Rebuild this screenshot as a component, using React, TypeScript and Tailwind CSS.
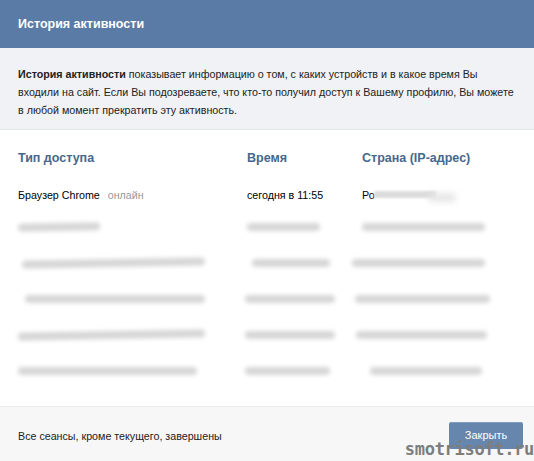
import React from 'react';

type Bar = { left: number; width: number; tilt?: boolean };

const rows: Bar[][] = [
  [{ left: 18, width: 82, tilt: true }, { left: 247, width: 73 }, { left: 362, width: 123 }],
  [{ left: 22, width: 183, tilt: true }, { left: 252, width: 78 }, { left: 352, width: 133 }],
  [{ left: 25, width: 180 }, { left: 245, width: 90 }, { left: 355, width: 135 }],
  [{ left: 18, width: 187, tilt: true }, { left: 245, width: 90 }, { left: 356, width: 131 }],
  [{ left: 18, width: 179 }, { left: 245, width: 85 }, { left: 370, width: 112 }],
];

const BlurRow: React.FC<{ bars: Bar[] }> = ({ bars }) => (
  <div className="relative h-[36px]">
    {bars.map((b, i) => (
      <div
        key={i}
        className={`absolute top-[11px] h-[8px] rounded-full bg-[#d6d6d6] blur-[2px] ${b.tilt ? '-rotate-[1deg]' : ''}`}
        style={{ left: b.left, width: b.width }}
      />
    ))}
  </div>
);

const App: React.FC = () => {
  return (
    <div className="w-[534px] h-[461px] bg-white flex flex-col relative overflow-hidden text-[10.7px] text-black" style={{ fontFamily: '"Liberation Sans", Arial, sans-serif' }}>
      <div className="h-[48px] bg-[#5a7ba6] flex items-center px-[18px]">
        <span className="text-white font-bold text-[12.5px]">История активности</span>
      </div>

      <div className="h-[82px] bg-[#f0f2f5] border-b border-[#e3e7ec] px-[18px] pt-[17px] leading-[18px] text-[#222] whitespace-nowrap">
        <b>История активности</b> показывает информацию о том, с каких устройств и в какое время Вы
        <br />
        входили на сайт. Если Вы подозреваете, что кто-то получил доступ к Вашему профилю, Вы можете
        <br />
        в любой момент прекратить эту активность.
      </div>

      <div className="flex-1">
        <div className="flex h-[48px] items-end pb-[10px] text-[12.5px] font-bold text-[#45688e]">
          <div className="w-[247px] pl-[18px]">Тип доступа</div>
          <div className="w-[115px]">Время</div>
          <div>Страна (IP-адрес)</div>
        </div>

        <div className="flex h-[34px] items-center">
          <div className="w-[247px] pl-[18px]">
            Браузер Chrome <span className="ml-[5px] text-[#999]">онлайн</span>
          </div>
          <div className="w-[115px]">сегодня в 11:55</div>
          <div className="relative flex items-center">
            <span>Ро</span>
            <div className="ml-[-1px] h-[7px] w-[62px] rounded-[2px] bg-[#dcdcdc] blur-[1px]" />
            <div className="ml-[-8px] mt-[6px] h-[9px] w-[28px] rounded-full bg-[#e6e6e6] blur-[3px]" />
          </div>
        </div>

        {rows.map((r, i) => (
          <BlurRow key={i} bars={r} />
        ))}
      </div>

      <div className="h-[55px] bg-[#f7f7f7] border-t border-[#e9ebee] flex items-center justify-between pl-[18px] pr-[11px] pt-[4px]">
        <span className="text-[#222]">Все сеансы, кроме текущего, завершены</span>
        <button className="w-[74px] h-[27px] mt-[-2px] bg-[#6686ad] text-white text-[11px] rounded-[2px] border-t border-[#7e9cbe]">Закрыть</button>
      </div>

      <div className="absolute right-0 bottom-[2px] text-[17px] leading-[20px] font-bold text-[#7d7d7d] tracking-[-0.3px]" style={{ fontFamily: '"DejaVu Sans Mono", monospace' }}>
        smotrisoft.ru
      </div>
    </div>
  );
};

export default App;
